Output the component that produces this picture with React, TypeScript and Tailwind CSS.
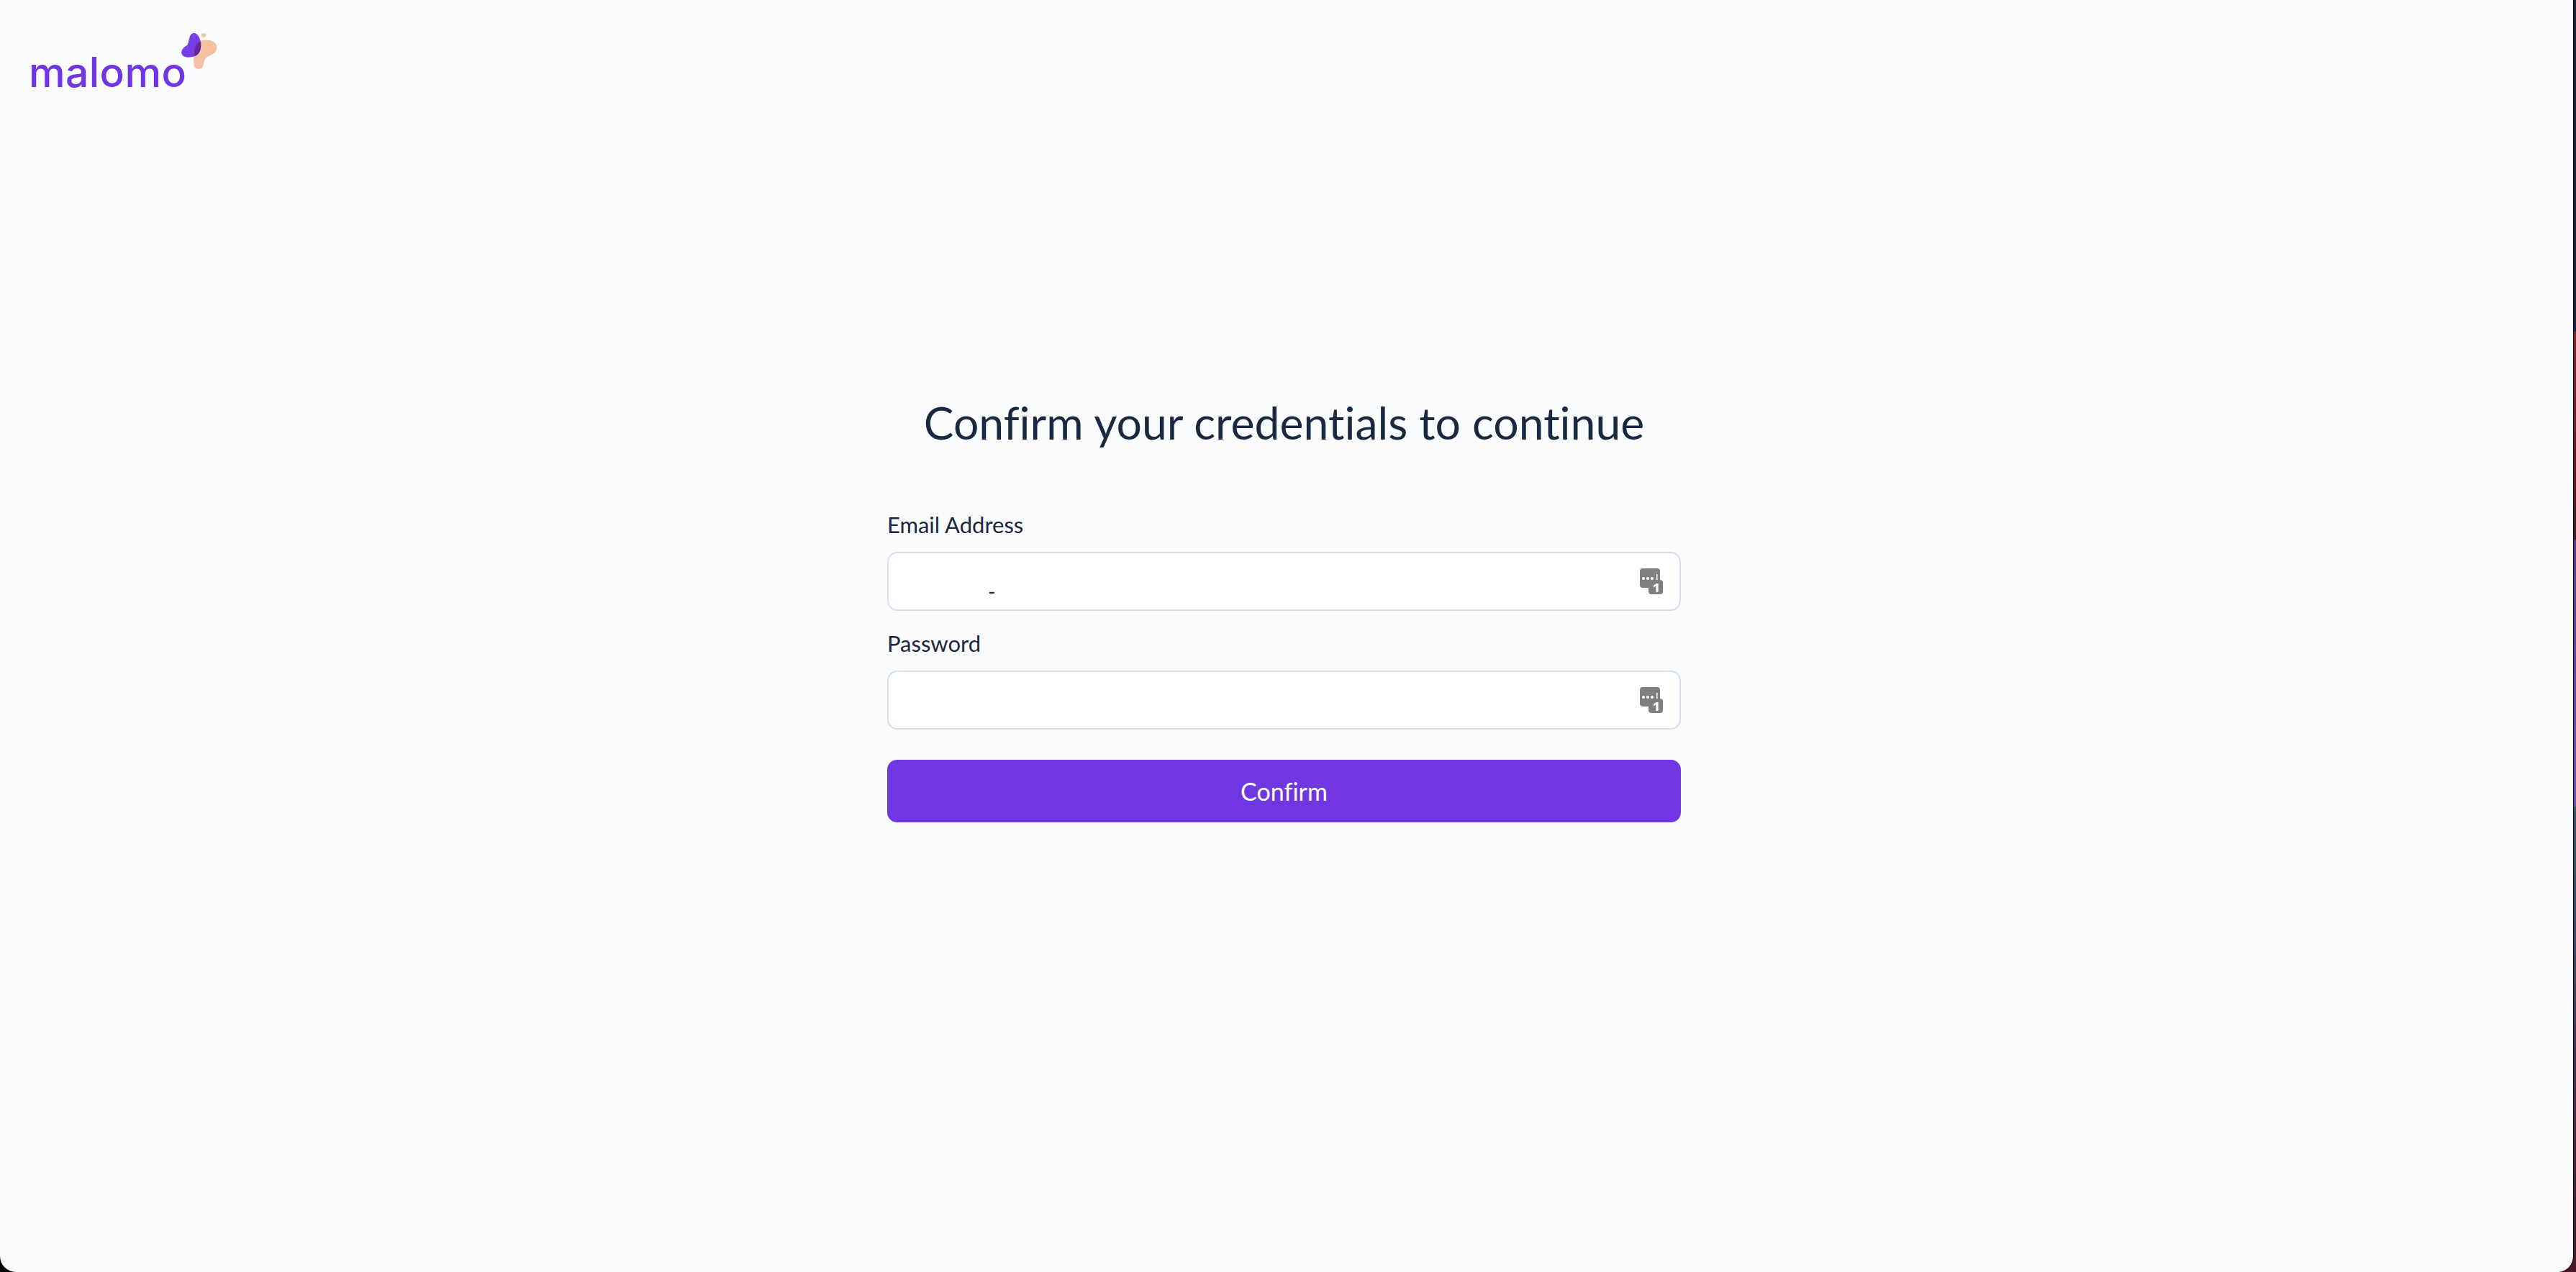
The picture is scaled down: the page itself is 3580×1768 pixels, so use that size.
import type { ReactNode } from 'react';

// Password-manager glyph sitting at the right of each field
function KeyIcon() {
  return (
    <svg viewBox="0 0 32 36" className="w-[32px] h-[36px] shrink-0" aria-hidden="true">
      <rect x="0" y="0" width="28" height="27" rx="4" fill="#7f7f7f" />
      <circle cx="5" cy="14" r="2" fill="#fff" />
      <circle cx="11" cy="14" r="2" fill="#fff" />
      <circle cx="17" cy="14" r="2" fill="#fff" />
      <rect x="23" y="8" width="1.6" height="11" fill="#fff" />
      <rect x="12" y="16" width="20" height="20" rx="4" fill="#7f7f7f" />
      <path d="M19 23.5l4-2.5h2.6v12H22.4v-8.4l-3.4 1.8z" fill="#fff" />
    </svg>
  );
}

function Field({ label, value }: { label: string; value?: string }) {
  return (
    <div>
      <label className="block text-[31px] leading-[38px] text-[#1a2840]">{label}</label>
      <div className="mt-[19px] h-[82px] flex items-center pr-[23px] bg-white border-2 border-[#d5e0ee] rounded-[14px]">
        <input
          readOnly
          value={value ?? ''}
          className="flex-1 min-w-0 h-full pl-[138px] pt-[28px] bg-transparent outline-none text-[28px] text-[#1a2840]"
        />
        <KeyIcon />
      </div>
    </div>
  );
}

function Logo(): ReactNode {
  return (
    <div className="inline-flex items-start">
      <span className="mt-[71px] font-['Inter',sans-serif] text-[57px] leading-[60px] font-medium tracking-[0.4px] text-[#7036e2]">malomo</span>
      <svg viewBox="0 0 52 52" className="w-[52px] h-[52px] -ml-[8px] mt-[46px]" aria-hidden="true">
        <path
          d="M19 47c4 4 10 4 12-1 2-4 1-10 6-13 4-2 11-4 13-10 2-7-3-12-10-13-8-1-18 0-21 7-2 6-1 20 0 30z"
          fill="#f6c0a3"
        />
        <circle cx="32" cy="3" r="3" fill="#f6c0a3" />
        <path
          d="M17 0c6-1 10 6 11 13 1 8-1 16-8 19-6 2-15 3-18-2-3-6 3-11 7-13 3-3 2-15 8-17z"
          fill="#7036e2"
          fillOpacity="0.96"
        />
        <path d="M28 12c-5 1-9 7-9 15l1 5c7-3 9-11 8-20z" fill="#5f2a9b" />
      </svg>
    </div>
  );
}

export default function App() {
  return (
    <div className="flex h-[1768px] w-full bg-[linear-gradient(to_right,#000_50%,#4a1528_50%)] font-['Lato',sans-serif] [font-variant-ligatures:none]">
      <main className="flex flex-col flex-1 min-w-0 bg-[#fafbfd] border-r-1 border-black rounded-b-[22px] pl-[40px]">
        <div>
          <Logo />
        </div>
        <div className="w-[1103px] ml-[1193px] mt-[416px]">
          <h1 className="text-center text-[62.5px] leading-[80px] text-[#1a2840]">Confirm your credentials to continue</h1>
          <form className="mt-[83px] flex flex-col gap-[26px]">
            <Field label="Email Address" value="-" />
            <Field label="Password" />
            <button type="button" className="mt-[16px] h-[87px] rounded-[14px] bg-[#7036e2] text-white text-[34px]">
              Confirm
            </button>
          </form>
        </div>
      </main>
      <aside className="w-[3px] shrink-0 bg-[linear-gradient(to_bottom,#1c1f4a_0%,#1c1f4a_26.1%,#7a2a28_26.1%,#4a1525_42.4%,#5a3a8a_42.4%,#7350b0_63.4%,#2f5a70_63.4%,#3a4a80_72%,#4a2a50_85%,#4a1528_100%)]" />
    </div>
  );
}
